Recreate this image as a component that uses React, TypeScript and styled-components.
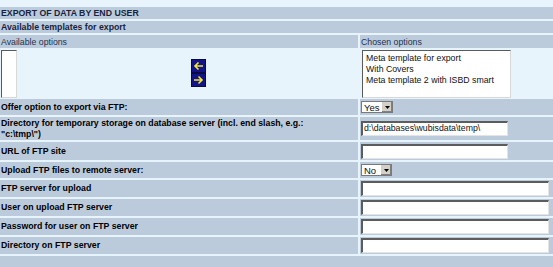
import styled, { createGlobalStyle } from 'styled-components';

const GlobalStyle = createGlobalStyle`
    html, body {
        margin: 0;
        padding: 0;
        background: #e8f4fc;
    }
`;

const Page = styled.div`
    display: flex;
    flex-direction: column;
    gap: 2px;
    padding-top: 7px;
    min-height: 260px;
    background: #e8f4fc;
    font-family: "Liberation Sans", Arial, sans-serif;
    font-size: 8.75px;
    color: #000;
    overflow: hidden;
`;

const Bar = styled.div`
    background: #bccbdc;
    height: 12px;
    line-height: 12px;
    padding-left: 1px;
    font-weight: bold;
    color: #18243e;
    white-space: nowrap;
`;

const Row = styled.div<{ $height?: number }>`
    display: grid;
    grid-template-columns: 358px 1fr;
    column-gap: 2px;
    height: ${p => p.$height ?? 17}px;
`;

const HeadCell = styled.div`
    background: #bccbdc;
    padding-left: 1px;
    padding-top: 1px;
    color: #24324e;
    line-height: 12px;
`;

const Label = styled.div`
    background: #bccbdc;
    padding: 0 16px 0 1px;
    font-weight: bold;
    display: flex;
    align-items: center;
    line-height: 10.5px;
`;

const Value = styled.div`
    background: #bccbdc;
    padding-left: 1px;
    display: flex;
    align-items: center;
`;

const OptionsLeft = styled.div`
    display: flex;
    align-items: flex-start;
    padding: 2px 0 0 1px;
`;

const ListBox = styled.div<{ $width: number }>`
    box-sizing: border-box;
    width: ${p => p.$width}px;
    height: 48px;
    background: #fff;
    border-top: 1px solid #5a5a5a;
    border-left: 1px solid #5a5a5a;
    border-right: 1px solid #d8d8d8;
    border-bottom: 1px solid #d8d8d8;
    padding: 2px 0 0 3px;
    line-height: 11px;
    color: #111;
`;

const Arrows = styled.div`
    display: flex;
    flex-direction: column;
    margin: 9px 0 0 174px;
`;

const ArrowButton = styled.div`
    width: 15px;
    height: 14px;
    background: #14148a;
    border: 1px solid #0a0a40;
    box-sizing: border-box;
    display: flex;
    align-items: center;
    justify-content: center;
`;

const OptionsRight = styled.div`
    padding: 2px 0 0 2px;
`;

const TextInput = styled.div<{ $width: number }>`
    box-sizing: border-box;
    width: ${p => p.$width}px;
    height: 15px;
    background: #fff;
    border-top: 2px solid #5c5c5c;
    border-left: 2px solid #5c5c5c;
    border-right: 1px solid #e4e4e4;
    border-bottom: 1px solid #e4e4e4;
    padding-left: 1px;
    line-height: 11px;
    color: #111;
    white-space: nowrap;
    overflow: hidden;
`;

const Select = styled.div<{ $width: number }>`
    box-sizing: border-box;
    width: ${p => p.$width}px;
    height: 12px;
    background: #fff;
    border: 1px solid #7a7a7a;
    display: flex;
    align-items: center;
    justify-content: space-between;
    padding-left: 2px;
    font-size: 9.5px;
    color: #111;
`;

const DropButton = styled.div`
    width: 10px;
    height: 10px;
    background: #d4d0c8;
    border-left: 1px solid #fff;
    box-shadow: inset -1px -1px 0 #808080;
    display: flex;
    align-items: center;
    justify-content: center;
`;

const Filler = styled.div`
    background: #bccbdc;
    flex: 1;
`;

const ArrowIcon = ({ dir }: { dir: 'left' | 'right' }) => (
    <svg width="11" height="10" viewBox="0 0 11 10">
        {dir === 'left' ? (
            <path d="M10 5H2M5.5 1.5L2 5l3.5 3.5" stroke="#f4e82a" strokeWidth="1.6" fill="none" />
        ) : (
            <path d="M1 5h8M5.5 1.5L9 5 5.5 8.5" stroke="#f4e82a" strokeWidth="1.6" fill="none" />
        )}
    </svg>
);

const DropDown = ({ value, width }: { value: string; width: number }) => (
    <Select $width={width}>
        {value}
        <DropButton>
            <svg width="5" height="3" viewBox="0 0 5 3"><path d="M0 0h5L2.5 3z" fill="#000" /></svg>
        </DropButton>
    </Select>
);

const fields = [
    'FTP server for upload',
    'User on upload FTP server',
    'Password for user on FTP server',
    'Directory on FTP server',
];

const App = () => {
    return (
        <>
            <GlobalStyle />
            <Page>
                <Bar>EXPORT OF DATA BY END USER</Bar>
                <Bar>Available templates for export</Bar>
                <Row $height={13}>
                    <HeadCell>Available options</HeadCell>
                    <HeadCell>Chosen options</HeadCell>
                </Row>
                <Row $height={49} style={{ marginTop: -2 }}>
                    <OptionsLeft>
                        <ListBox $width={16} />
                        <Arrows>
                            <ArrowButton><ArrowIcon dir="left" /></ArrowButton>
                            <ArrowButton><ArrowIcon dir="right" /></ArrowButton>
                        </Arrows>
                    </OptionsLeft>
                    <OptionsRight>
                        <ListBox $width={149}>
                            Meta template for export<br />
                            With Covers<br />
                            Meta template 2 with ISBD smart
                        </ListBox>
                    </OptionsRight>
                </Row>
                <Row $height={16}>
                    <Label>Offer option to export via FTP:</Label>
                    <Value><DropDown value="Yes" width={32} /></Value>
                </Row>
                <Row $height={23}>
                    <Label>Directory for temporary storage on database server (incl. end slash, e.g.: "c:\tmp\")</Label>
                    <Value><TextInput $width={147}>d:\databases\wubisdata\temp\</TextInput></Value>
                </Row>
                <Row $height={18}>
                    <Label>URL of FTP site</Label>
                    <Value><TextInput $width={147} /></Value>
                </Row>
                <Row $height={16}>
                    <Label>Upload FTP files to remote server:</Label>
                    <Value><DropDown value="No" width={31} /></Value>
                </Row>
                {fields.map(f => (
                    <Row key={f} $height={17}>
                        <Label>{f}</Label>
                        <Value><TextInput $width={188} /></Value>
                    </Row>
                ))}
                <Filler />
            </Page>
        </>
    );
};

export default App;
